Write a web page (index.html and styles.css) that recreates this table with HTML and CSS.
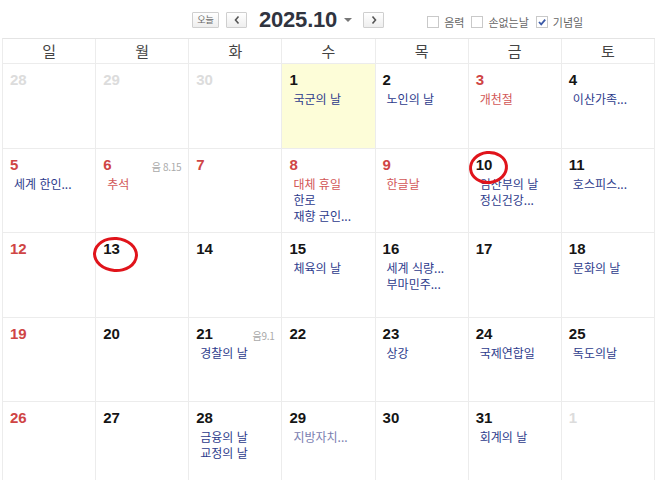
FILE: index.html
```html
<!DOCTYPE html>
<html lang="ko">
<head>
<meta charset="utf-8">
<title>2025.10</title>
<link rel="stylesheet" href="styles.css">
</head>
<body>
<div class="toolbar">
  <button class="btn today">오늘</button>
  <button class="btn nav prev"><svg width="8" height="10" viewBox="0 0 8 10"><path d="M5.5 1.5 L2.5 5 L5.5 8.5" fill="none" stroke="#555" stroke-width="1.6"/></svg></button>
  <div class="title">2025.10<span class="caret"></span></div>
  <button class="btn nav next"><svg width="8" height="10" viewBox="0 0 8 10"><path d="M2.5 1.5 L5.5 5 L2.5 8.5" fill="none" stroke="#555" stroke-width="1.6"/></svg></button>
  <div class="options">
    <label class="opt"><span class="box"></span>음력</label>
    <label class="opt"><span class="box"></span>손없는날</label>
    <label class="opt"><span class="box checked"><svg width="10" height="10" viewBox="0 0 10 10"><path d="M2 5 L4.2 7.3 L8.2 2.6" fill="none" stroke="#3b5aa8" stroke-width="1.8"/></svg></span>기념일</label>
  </div>
</div>

<div class="calendar">
  <div class="dow">일</div><div class="dow">월</div><div class="dow">화</div><div class="dow">수</div><div class="dow">목</div><div class="dow">금</div><div class="dow">토</div>

  <div class="cell other"><span class="num">28</span></div>
  <div class="cell other"><span class="num">29</span></div>
  <div class="cell other"><span class="num">30</span></div>
  <div class="cell today-cell"><span class="num">1</span><p class="ev">국군의 날</p></div>
  <div class="cell"><span class="num">2</span><p class="ev">노인의 날</p></div>
  <div class="cell"><span class="num red">3</span><p class="ev hol">개천절</p></div>
  <div class="cell"><span class="num">4</span><p class="ev">이산가족...</p></div>

  <div class="cell"><span class="num red">5</span><p class="ev">세계 한인...</p></div>
  <div class="cell"><span class="num red">6</span><span class="lunar">음 8.15</span><p class="ev hol">추석</p></div>
  <div class="cell"><span class="num red">7</span></div>
  <div class="cell"><span class="num red">8</span><p class="ev hol">대체 휴일</p><p class="ev">한로</p><p class="ev">재향 군인...</p></div>
  <div class="cell"><span class="num red">9</span><p class="ev hol">한글날</p></div>
  <div class="cell"><span class="num">10</span><p class="ev">임산부의 날</p><p class="ev">정신건강...</p><span class="mark mark-10"></span></div>
  <div class="cell"><span class="num">11</span><p class="ev">호스피스...</p></div>

  <div class="cell"><span class="num red">12</span></div>
  <div class="cell"><span class="num">13</span><span class="mark mark-13"></span></div>
  <div class="cell"><span class="num">14</span></div>
  <div class="cell"><span class="num">15</span><p class="ev">체육의 날</p></div>
  <div class="cell"><span class="num">16</span><p class="ev">세계 식량...</p><p class="ev">부마민주...</p></div>
  <div class="cell"><span class="num">17</span></div>
  <div class="cell"><span class="num">18</span><p class="ev">문화의 날</p></div>

  <div class="cell"><span class="num red">19</span></div>
  <div class="cell"><span class="num">20</span></div>
  <div class="cell"><span class="num">21</span><span class="lunar">음9.1</span><p class="ev">경찰의 날</p></div>
  <div class="cell"><span class="num">22</span></div>
  <div class="cell"><span class="num">23</span><p class="ev">상강</p></div>
  <div class="cell"><span class="num">24</span><p class="ev">국제연합일</p></div>
  <div class="cell"><span class="num">25</span><p class="ev">독도의날</p></div>

  <div class="cell"><span class="num red">26</span></div>
  <div class="cell"><span class="num">27</span></div>
  <div class="cell"><span class="num">28</span><p class="ev">금융의 날</p><p class="ev">교정의 날</p></div>
  <div class="cell"><span class="num">29</span><p class="ev light">지방자치...</p></div>
  <div class="cell"><span class="num">30</span></div>
  <div class="cell"><span class="num">31</span><p class="ev">회계의 날</p></div>
  <div class="cell other"><span class="num">1</span></div>
</div>
</body>
</html>
```

FILE: styles.css
```css
* { box-sizing: border-box; }
html, body { margin: 0; padding: 0; background: #fff; overflow: hidden; }
body {
  font-family: "Noto Sans CJK KR", "Liberation Sans", sans-serif;
  color: #222;
  width: 658px;
  height: 480px;
}

.toolbar {
  height: 38px;
  display: flex;
  align-items: center;
  padding-left: 192px;
  padding-top: 1px;
}
.btn {
  height: 16px;
  border: 1px solid #cfcfcf;
  border-radius: 1px;
  background: linear-gradient(#ffffff, #eeeeee);
  padding: 0;
  margin: 0;
  display: flex;
  align-items: center;
  justify-content: center;
  font-family: "Noto Sans CJK KR", sans-serif;
  color: #666;
}
.today { width: 27px; font-size: 9px; line-height: 14px; }
.nav { width: 21px; }
.prev { margin-left: 7px; }
.title {
  margin-left: 12px;
  font-family: "Liberation Sans", sans-serif;
  font-weight: bold;
  font-size: 22px;
  color: #30343f;
  display: flex;
  align-items: center;
  letter-spacing: -0.2px;
}
.caret {
  display: inline-block;
  margin-left: 7px;
  margin-top: 1px;
  width: 0; height: 0;
  border-left: 4px solid transparent;
  border-right: 4px solid transparent;
  border-top: 4px solid #777;
}
.next { margin-left: 11px; }

.options {
  display: flex;
  align-items: center;
  margin-left: 43px;
  margin-top: 5px;
  gap: 7px;
}
.opt {
  display: flex;
  align-items: center;
  font-size: 11px;
  color: #666;
  gap: 5px;
}
.box {
  width: 12px; height: 12px;
  border: 1px solid #c9c9c9;
  background: #fff;
  display: flex;
  align-items: center;
  justify-content: center;
}

.calendar {
  margin-left: 2px;
  width: 653px;
  display: grid;
  grid-template-columns: repeat(7, 1fr);
  grid-template-rows: 25px repeat(5, 84.5px);
  border-top: 1px solid #e4e4e4;
  border-left: 1px solid #ececec;
}
.dow {
  border-right: 1px solid #ececec;
  border-bottom: 1px solid #ececec;
  text-align: center;
  font-size: 15px;
  line-height: 23px;
  color: #444;
}
.cell {
  position: relative;
  border-right: 1px solid #ececec;
  border-bottom: 1px solid #ececec;
  padding: 7px 6px 0 7px;
}
.today-cell { background: #fdfdd8; }
.num {
  display: block;
  font-family: "Liberation Sans", sans-serif;
  font-weight: bold;
  font-size: 15px;
  line-height: 18px;
  color: #151515;
}
.num.red { color: #cf4545; }
.other .num { color: #dcdcdc; }
.lunar {
  position: absolute;
  top: 10px;
  right: 7px;
  font-size: 10px;
  color: #aaa;
  letter-spacing: -0.3px;
}
.ev {
  margin: 0;
  padding-left: 4px;
  font-size: 12px;
  line-height: 16px;
  color: #2d3b8c;
  white-space: nowrap;
}
.cell .num + .ev, .cell .lunar + .ev { margin-top: 2px; }
.ev.hol { color: #d25757; }
.ev.light { color: #7a80b0; }

.mark {
  position: absolute;
  border: 3px solid #e0141b;
  border-radius: 50%;
  pointer-events: none;
}
.mark-10 { left: 0; top: 2px; width: 39px; height: 33px; transform: rotate(-6deg); }
.mark-13 { left: -3px; top: 4px; width: 45px; height: 35px; transform: rotate(4deg); }
```
